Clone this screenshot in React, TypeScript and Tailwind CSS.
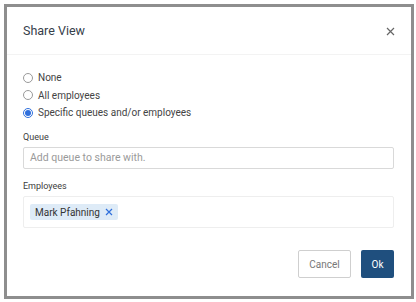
import React from "react";

function Radio({ checked, label }: { checked?: boolean; label: string }) {
  return (
    <div className="flex items-center h-[17px]">
      <span
        className={
          checked
            ? "w-[10px] h-[10px] rounded-full border border-[#2f6fdc] flex items-center justify-center"
            : "w-[10px] h-[10px] rounded-full border border-[#9a9a9a]"
        }
      >
        {checked && <span className="w-[6px] h-[6px] rounded-full bg-[#2f6fdc]" />}
      </span>
      <span className="ml-[5px] text-[10px] text-[#444]">{label}</span>
    </div>
  );
}

export default function App() {
  return (
    <div
      className="w-[416px] h-[302px] bg-white pt-[4px] pl-[4px]"
      style={{ fontFamily: "Roboto, 'Liberation Sans', sans-serif" }}
    >
      <div className="w-[410px] h-[295px] border-[3px] border-[#8e8e8e] bg-white flex flex-col">
        <div className="h-[48px] pt-[1px] flex items-center justify-between pl-[16px] pr-[16px] border-b border-[#f3f3f3]">
          <span className="text-[12.5px] text-[#36404a]">Share View</span>
          <svg width="9" height="9" viewBox="0 0 9 9" className="text-[#666]">
            <path d="M1 1 L8 8 M8 1 L1 8" stroke="currentColor" strokeWidth="1.2" />
          </svg>
        </div>
        <div className="flex flex-col pl-[16px] pr-[17px] pt-[14px]">
          <div className="flex flex-col gap-[0.5px]">
            <Radio label="None" />
            <Radio label="All employees" />
            <Radio checked label="Specific queues and/or employees" />
          </div>
          <div className="mt-[10px] text-[9px] text-[#3d3d3d] leading-[12px]">Queue</div>
          <div className="mt-[4px] h-[22px] border border-[#d9d9d9] rounded-[2px] flex items-center pl-[6px] text-[10.5px] text-[#9a9a9a]">
            Add queue to share with.
          </div>
          <div className="mt-[11px] text-[9px] text-[#3d3d3d] leading-[12px]">Employees</div>
          <div className="mt-[4px] h-[32px] border border-[#eeeeee] rounded-[2px] flex items-center pl-[6px]">
            <span className="h-[16px] bg-[#deebf7] rounded-[2px] flex items-center px-[5px] text-[10px] text-[#333]">
              Mark Pfahning
              <svg width="8" height="8" viewBox="0 0 8 8" className="ml-[5px] text-[#2f6fdc]">
                <path d="M1 1 L7 7 M7 1 L1 7" stroke="currentColor" strokeWidth="1.2" />
              </svg>
            </span>
          </div>
          <div className="mt-[22px] flex justify-end gap-[10px]">
            <button className="w-[53px] h-[28px] border border-[#cfcfcf] rounded-[2px] bg-white text-[10px] text-[#777]">
              Cancel
            </button>
            <button className="w-[33px] h-[28px] rounded-[2px] bg-[#1f4f7e] text-[10px] text-white">
              Ok
            </button>
          </div>
        </div>
      </div>
    </div>
  );
}
